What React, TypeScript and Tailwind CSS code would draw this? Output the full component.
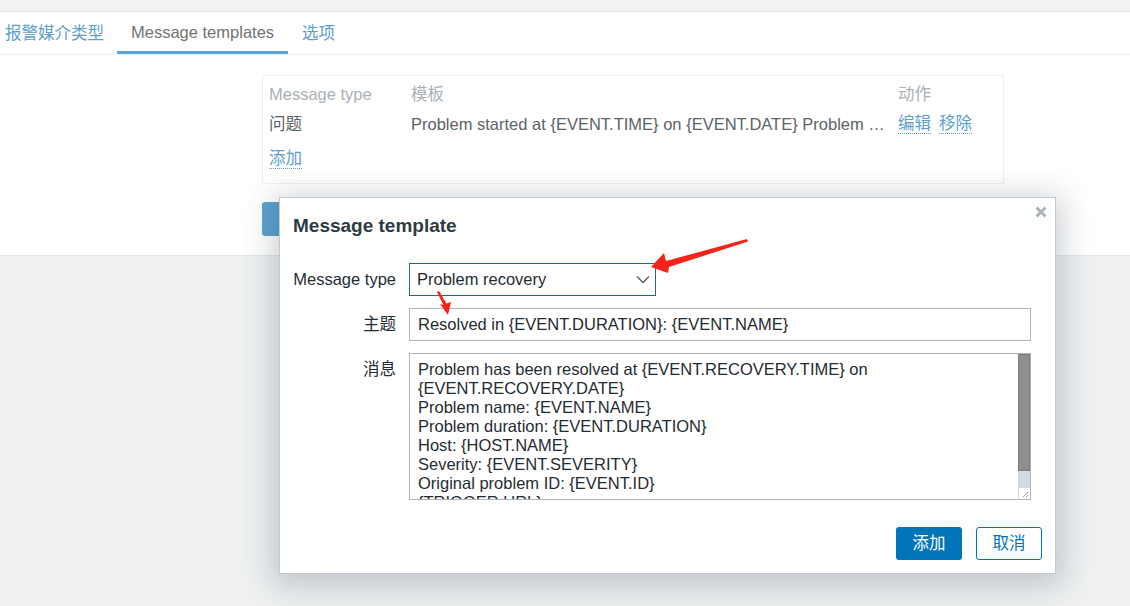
import React from "react";

const FONT = "font-['Liberation_Sans','Noto_Sans_CJK_SC',sans-serif]";

function Chevron() {
  return (
    <svg width="14" height="9" viewBox="0 0 14 9" className="block">
      <path d="M1 1.5 L7 7.5 L13 1.5" fill="none" stroke="#555c61" strokeWidth="1.3" />
    </svg>
  );
}

function CloseX() {
  return (
    <svg width="12" height="12" viewBox="0 0 12 12" className="block">
      <path d="M1.5 1.5 L10.5 10.5 M10.5 1.5 L1.5 10.5" stroke="#aab3b9" strokeWidth="3" strokeLinecap="butt" />
    </svg>
  );
}

function Arrows() {
  return (
    <svg width="1130" height="606" viewBox="0 0 1130 606" className="absolute left-0 top-0 pointer-events-none">
      <polygon
        points="651,267 664,253 666,261 747,239 748,241.5 669,267 668,273"
        fill="#f5241b"
      />
      <polygon
        points="448,315 440,304 443.5,305 437,292 439,291 446.5,303.5 451,302"
        fill="#f5241b"
      />
    </svg>
  );
}

const lines = [
  "Problem has been resolved at {EVENT.RECOVERY.TIME} on",
  "{EVENT.RECOVERY.DATE}",
  "Problem name: {EVENT.NAME}",
  "Problem duration: {EVENT.DURATION}",
  "Host: {HOST.NAME}",
  "Severity: {EVENT.SEVERITY}",
  "Original problem ID: {EVENT.ID}",
  "{TRIGGER.URL}",
];

export default function App() {
  return (
    <div className={`relative h-[606px] w-[1130px] overflow-hidden bg-[#eef0f1] text-[16.5px] ${FONT}`}>
      {/* top band */}
      <div className="h-[12px] border-b border-[#e4e6e8] bg-[#f1f2f4]" />
      {/* white page area */}
      <div className="h-[244px] border-b border-[#e3e6e8] bg-white">
        {/* tabs */}
        <div className="flex h-[43px] border-b border-[#eceef0]">
          <div className="flex h-full items-center pl-[5px] pr-[13px] text-[#5d9fcc]">报警媒介类型</div>
          <div className="flex h-full items-center border-b-[3px] border-[#5aa5d1] px-[14px] pt-[1px] text-[#6f7376]">
            Message templates
          </div>
          <div className="flex h-full items-center px-[14px] text-[#5d9fcc]">选项</div>
        </div>
        {/* table box */}
        <div className="ml-[262px] mt-[20px] w-[742px] border border-[#edf0f2] px-[6px] pb-[14px] pt-[8px]">
          <div className="flex h-[20px] leading-[20px] text-[#a9b1b7]">
            <div className="w-[142px] shrink-0">Message type</div>
            <div className="w-[487px] shrink-0">模板</div>
            <div className="flex-1">动作</div>
          </div>
          <div className="mt-[10px] flex h-[20px] leading-[20px] text-[#5b6368]">
            <div className="w-[142px] shrink-0">问题</div>
            <div className="w-[487px] shrink-0 whitespace-nowrap">
              Problem started at {"{EVENT.TIME}"} on {"{EVENT.DATE}"} Problem …
            </div>
            <div className="flex flex-1 gap-[8px] whitespace-nowrap text-[#5d9fcc]">
              <span className="border-b border-dotted border-[#5d9fcc] leading-[19px]">编辑</span>
              <span className="border-b border-dotted border-[#5d9fcc] leading-[19px]">移除</span>
            </div>
          </div>
          <div className="mt-[15px] flex h-[20px]">
            <span className="border-b border-dotted border-[#5d9fcc] leading-[19px] text-[#5d9fcc]">添加</span>
          </div>
        </div>
        {/* hidden button */}
        <div className="ml-[262px] mt-[18px] h-[34px] w-[80px] rounded-[3px] bg-[#5ba3cf]" />
      </div>

      {/* modal */}
      <div className="absolute left-[279px] top-[197px] w-[777px] border border-[#c3cacf] bg-white px-[13px] pb-[13px] pt-[16px] shadow-[0_5px_28px_6px_rgba(40,60,72,0.24)]">
        <div className="absolute right-[8px] top-[8px]">
          <CloseX />
        </div>
        <div className="h-[24px] text-[19px] font-bold leading-[24px] text-[#2f3b44]">Message template</div>
        <div className="mt-[25px] grid grid-cols-[103px_622px] gap-x-[13px] gap-y-[12px] text-[#1f2c33]">
          <div className="flex h-[33px] items-center justify-end">Message type</div>
          <div className="flex h-[33px] w-[247px] items-center justify-between border border-[#1f65a0] pl-[7px] pr-[5px]">
            <span>Problem recovery</span>
            <Chevron />
          </div>
          <div className="flex h-[33px] items-center justify-end">主题</div>
          <div className="flex h-[33px] items-center border border-[#acb5bb] pl-[8px]">
            Resolved in {"{EVENT.DURATION}"}: {"{EVENT.NAME}"}
          </div>
          <div className="flex h-[33px] items-center justify-end">消息</div>
          <div className="flex h-[147px] border border-[#acb5bb]">
            <div className="flex-1 overflow-hidden pl-[8px] pt-[6px] leading-[19px]">
              {lines.map((l) => (
                <div key={l} className="whitespace-nowrap">{l}</div>
              ))}
            </div>
            <div className="flex w-[12px] flex-col">
              <div className="h-[117px] border border-[#7d7d7d] bg-[#8f8f8f]" />
              <div className="h-[16px] bg-[#d3d9de]" />
              <div className="relative flex-1 border-l border-t border-[#d3d9de] bg-white">
                <svg width="11" height="11" viewBox="0 0 11 11" className="absolute bottom-0 right-0">
                  <path d="M9 4 L4 9 M9 7 L7 9" stroke="#9a9a9a" strokeWidth="1" />
                </svg>
              </div>
            </div>
          </div>
        </div>
        <div className="mt-[27px] flex justify-end gap-[14px]">
          <div className="flex h-[33px] w-[66px] items-center justify-center rounded-[3px] bg-[#0275b8] text-white">添加</div>
          <div className="flex h-[33px] w-[66px] items-center justify-center rounded-[3px] border border-[#0275b8] bg-white text-[#0275b8]">取消</div>
        </div>
      </div>

      <Arrows />
    </div>
  );
}
